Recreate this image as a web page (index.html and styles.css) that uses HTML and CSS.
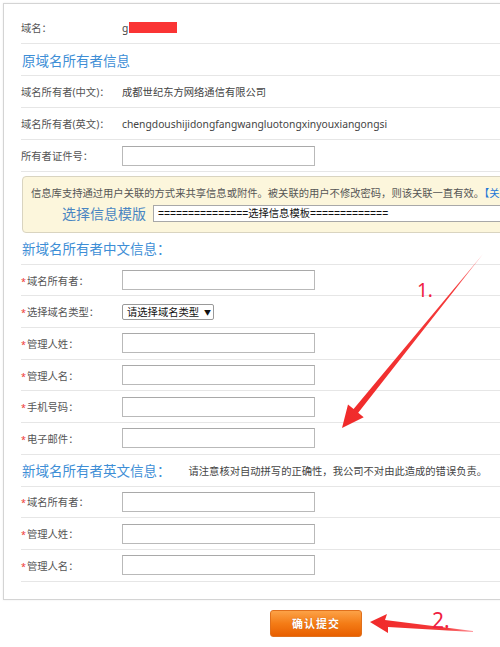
FILE: index.html
```html
<!DOCTYPE html>
<html lang="zh-CN">
<head>
<meta charset="utf-8">
<title>域名过户</title>
<link rel="stylesheet" href="styles.css">
</head>
<body>
<div class="panel">
  <div class="row"><span class="label">域名：</span><span class="value domain">g<span class="mask"></span></span></div>
  <div class="row"><h2 class="heading">原域名所有者信息</h2></div>
  <div class="row"><span class="label">域名所有者(中文)：</span><span class="value">成都世纪东方网络通信有限公司</span></div>
  <div class="row"><span class="label">域名所有者(英文)：</span><span class="value latin">chengdoushijidongfangwangluotongxinyouxiangongsi</span></div>
  <div class="row"><span class="label">所有者证件号：</span><span class="input"></span></div>
  <div class="notice">
    <p class="notice-text">信息库支持通过用户关联的方式来共享信息或附件。被关联的用户不修改密码，则该关联一直有效。<span class="link">【关联用户】</span></p>
    <div class="tpl"><span class="tpl-label">选择信息模版</span><span class="tpl-select">===============选择信息模板=============</span></div>
  </div>
  <div class="sec">
    <div class="row"><h2 class="heading">新域名所有者中文信息：</h2></div>
    <div class="row"><span class="label"><i class="req">*</i>域名所有者：</span><span class="input"></span></div>
    <div class="row"><span class="label"><i class="req">*</i>选择域名类型：</span><span class="select">请选择域名类型<b class="caret">▼</b></span></div>
    <div class="row"><span class="label"><i class="req">*</i>管理人姓：</span><span class="input"></span></div>
    <div class="row"><span class="label"><i class="req">*</i>管理人名：</span><span class="input"></span></div>
    <div class="row"><span class="label"><i class="req">*</i>手机号码：</span><span class="input"></span></div>
    <div class="row"><span class="label"><i class="req">*</i>电子邮件：</span><span class="input"></span></div>
    <div class="row"><h2 class="heading">新域名所有者英文信息：</h2><span class="note">请注意核对自动拼写的正确性，我公司不对由此造成的错误负责。</span></div>
    <div class="row"><span class="label"><i class="req">*</i>域名所有者：</span><span class="input"></span></div>
    <div class="row"><span class="label"><i class="req">*</i>管理人姓：</span><span class="input"></span></div>
    <div class="row"><span class="label"><i class="req">*</i>管理人名：</span><span class="input"></span></div>
  </div>
</div>
<div class="actions"><span class="btn">确认提交</span></div>

<svg class="annot" width="500" height="647" viewBox="0 0 500 647">
  <defs>
    <linearGradient id="g1" x1="483" y1="254" x2="342" y2="428" gradientUnits="userSpaceOnUse">
      <stop offset="0" stop-color="#ff9aa0"/>
      <stop offset="0.2" stop-color="#f43a3a"/>
      <stop offset="1" stop-color="#f02a2a"/>
    </linearGradient>
    <linearGradient id="g2" x1="473" y1="630" x2="370" y2="622" gradientUnits="userSpaceOnUse">
      <stop offset="0" stop-color="#ff9aa0"/>
      <stop offset="0.25" stop-color="#f43a3a"/>
      <stop offset="1" stop-color="#f02a2a"/>
    </linearGradient>
  </defs>
  <polygon fill="url(#g1)" points="342,428 348,404.6 353.6,409 483,254 358.2,412.8 363.7,417.2"/>
  <polygon fill="url(#g2)" points="370,622 387,614 385,620 473,631 473,632 388,627 388,633"/>
  <text class="num" x="417" y="297" font-size="19">1.</text>
  <text class="num" x="432" y="628" font-size="21">2.</text>
</svg>
</body>
</html>
```

FILE: styles.css
```css
html, body {
  margin: 0;
  padding: 0;
  overflow: hidden;
  background: #fff;
}
body {
  position: relative;
  width: 500px;
  height: 647px;
  font-family: "Noto Sans", "Noto Sans CJK SC", sans-serif;
  font-size: 10.3px;
  color: #555;
}
.panel {
  box-sizing: border-box;
  width: 540px;
  margin: 3px 0 0 3px;
  padding: 8px 0 17px 17px;
  border: 1px solid #d4d4d4;
  box-shadow: 0 0 2px rgba(0, 0, 0, 0.08);
}
.row {
  box-sizing: border-box;
  display: flex;
  align-items: center;
  height: 32px;
  border-bottom: 1px solid #e6e6e6;
}
.sec .row {
  height: 31.7px;
}
.label {
  flex: none;
  width: 101px;
  color: #555;
  white-space: nowrap;
}
.value {
  color: #444;
  white-space: nowrap;
}
.domain {
  display: flex;
  align-items: center;
}
.mask {
  display: inline-block;
  width: 48px;
  height: 11px;
  margin-left: 1px;
  background: #fa3434;
}
.heading {
  margin: 0 0 0 1px;
  font-size: 13.5px;
  font-weight: normal;
  color: #3d8ed6;
  white-space: nowrap;
}
.note {
  margin-left: 18px;
  color: #444;
  white-space: nowrap;
}
.input {
  box-sizing: border-box;
  display: block;
  width: 193px;
  height: 20px;
  border: 1px solid #b9b9b9;
  border-top-color: #a9a9a9;
  background: #fff;
}
.req {
  font-style: normal;
  color: #e33;
  font-size: 9px;
  margin-right: 1px;
}
.select {
  box-sizing: border-box;
  display: flex;
  align-items: center;
  flex: none;
  height: 16px;
  width: 92px;
  padding: 0 0 0 4px;
  border: 1px solid #999;
  border-radius: 2px;
  color: #111;
  font-size: 10.3px;
  white-space: nowrap;
  background: #fff;
}
.caret {
  font-weight: normal;
  font-size: 7px;
  margin-left: 5px;
}
.notice {
  box-sizing: border-box;
  height: 57px;
  margin: 4px 0 0 1px;
  padding: 9px 0 0 8px;
  border: 1px solid #d9d4c0;
  border-radius: 4px;
  background: #fcf6dc;
  white-space: nowrap;
  overflow: hidden;
}
.notice-text {
  margin: 0;
  height: 15px;
  line-height: 15px;
  color: #555;
}
.link {
  color: #1f78d6;
}
.tpl {
  display: flex;
  align-items: center;
  margin-top: 2px;
  padding-left: 31px;
}
.tpl-label {
  font-size: 14px;
  color: #4a86c2;
}
.tpl-select {
  box-sizing: border-box;
  display: block;
  flex: 1;
  height: 17px;
  line-height: 15px;
  margin-left: 7px;
  padding-left: 4px;
  border: 1px solid #a8a8a8;
  background: #fff;
  color: #111;
  font-family: "Liberation Sans", "Noto Sans CJK SC", sans-serif;
  font-size: 10.3px;
}
.actions {
  padding: 10px 0 0 270px;
}
.btn {
  box-sizing: border-box;
  display: flex;
  align-items: center;
  justify-content: center;
  width: 92px;
  height: 27px;
  border: 1px solid #e0701c;
  border-radius: 3px;
  background: linear-gradient(#fca247, #f47c16 50%, #e85f00);
  color: #fff;
  font-weight: bold;
  font-size: 11px;
  letter-spacing: 1px;
  text-shadow: 0 0 1px rgba(140, 50, 0, 0.5);
}
.annot {
  position: absolute;
  left: 0;
  top: 0;
  pointer-events: none;
}
.num {
  fill: #ef2040;
  font-family: "Noto Sans", sans-serif;
}
```
